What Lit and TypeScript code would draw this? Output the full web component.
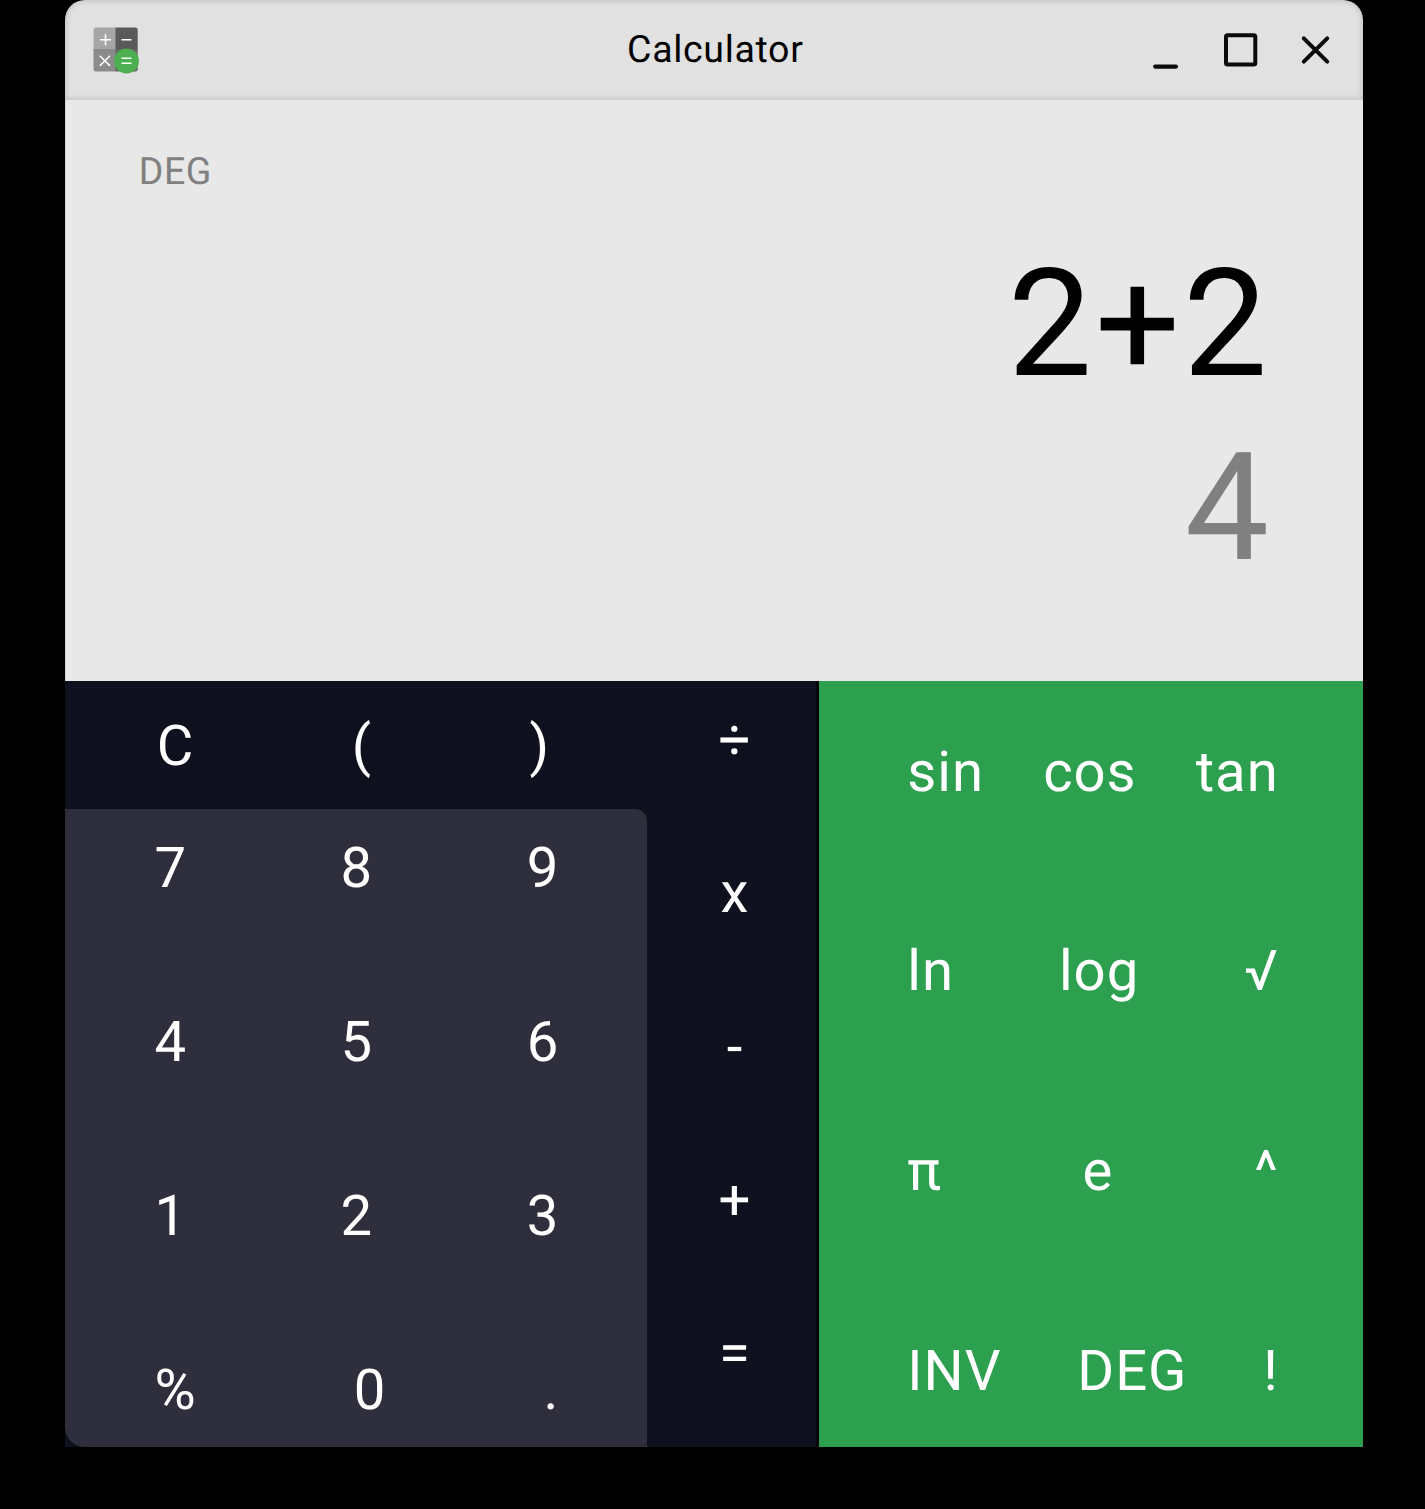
import { LitElement, html, css } from "lit";
import { customElement } from "lit/decorators.js";

const CLEAR_ROW = ["C", "(", ")"];
const DIGIT_ROWS = [
  ["7", "8", "9"],
  ["4", "5", "6"],
  ["1", "2", "3"],
  ["%", "0", "."],
];
const OPERATORS = ["÷", "x", "-", "+", "="];
const FUNCTION_ROWS = [
  ["sin", "cos", "tan"],
  ["ln", "log", "√"],
  ["π", "e", "^"],
  ["INV", "DEG", "!"],
];

@customElement("app-root")
export class AppRoot extends LitElement {
  static styles = css`
    :host {
      display: block;
      box-sizing: border-box;
      height: 1509px;
      padding: 0 62px 62px 65px;
      background: #000;
      overflow: hidden;
      font-family: Roboto, "Liberation Sans", sans-serif;
      text-rendering: geometricPrecision;
    }
    .window {
      display: flex;
      flex-direction: column;
      width: 1298px;
      height: 1447px;
    }
    .titlebar {
      box-sizing: border-box;
      display: grid;
      grid-template-columns: 1fr auto 1fr;
      align-items: center;
      height: 100px;
      padding: 0 30px 0 28px;
      background: #e1e1e1;
      border-radius: 20px 20px 0 0;
      box-shadow: inset 0 0 6px rgba(0, 0, 0, 0.2);
    }
    .logo {
      display: block;
    }
    .title {
      padding-left: 4.6px;
      font-size: 37.5px;
      line-height: 44px;
      letter-spacing: 0.018em;
      color: #000;
    }
    .controls {
      justify-self: end;
      display: block;
    }
    .display {
      box-sizing: border-box;
      height: 581px;
      padding: 50px 94px 0 73.7px;
      background: #e8e8e8;
      display: flex;
      flex-direction: column;
      box-shadow: inset 1px 0 0 #d4d4d4;
    }
    .mode {
      font-size: 37.5px;
      line-height: 44px;
      letter-spacing: 0.016em;
      color: #808080;
    }
    .expression,
    .result {
      text-align: right;
      font-size: 150px;
      line-height: 176px;
    }
    .expression {
      margin: 42px -1.4px 0 0;
      letter-spacing: 0.02em;
      color: #000;
    }
    .result {
      margin-top: 8px;
      color: #808080;
    }
    .pads {
      display: flex;
      height: 766px;
      color: #fff;
      font-size: 56.25px;
      line-height: 66px;
      letter-spacing: 0.017em;
    }
    .main {
      display: flex;
      width: 751px;
      background: #0f111e;
    }
    .left {
      display: flex;
      flex-direction: column;
      width: 582px;
    }
    .row {
      display: flex;
      justify-content: space-between;
    }
    .clear {
      box-sizing: border-box;
      height: 128px;
      padding: 32px 97px 0 91.8px;
    }
    .digits {
      box-sizing: border-box;
      flex: 1;
      display: flex;
      flex-direction: column;
      justify-content: space-between;
      padding: 26px 87.7px 24px 89.5px;
      background: #2f2e3c;
      border-radius: 0 12px 0 20px;
    }
    .operators {
      box-sizing: border-box;
      flex: 1;
      display: flex;
      flex-direction: column;
      align-items: center;
      justify-content: space-between;
      padding: 26px 0 61px 7px;
    }
    .divider {
      width: 3px;
      background: #020306;
    }
    .functions {
      box-sizing: border-box;
      flex: 1;
      display: flex;
      flex-direction: column;
      justify-content: space-between;
      padding: 57.6px 84.3px 43px 88.3px;
      background: #2ca04e;
    }
  `;

  private row(keys: string[], extra = "") {
    return html`<div class="row ${extra}">${keys.map((k) => html`<span>${k}</span>`)}</div>`;
  }

  render() {
    return html`
      <div class="window">
        <div class="titlebar">
          <svg class="logo" width="48" height="50" viewBox="0 0 48 50">
            <defs>
              <clipPath id="tile"><rect x="0.5" y="2.4" width="44.2" height="44" rx="2.5" /></clipPath>
            </defs>
            <g clip-path="url(#tile)">
              <rect width="23" height="25" fill="#a6a6a6" />
              <rect x="22.5" width="24" height="25" fill="#595959" />
              <rect y="24" width="23" height="24" fill="#8b8b8b" />
              <rect x="22.5" y="24" width="24" height="24" fill="#646464" />
            </g>
            <circle cx="33.5" cy="36" r="12.5" fill="#4caf50" />
            <g stroke="#fff" stroke-width="1.5" fill="none">
              <path d="M7 14.7H18M12.5 9.2V20.2M28.5 14.7H38.5M6.8 30.7L17 40.9M17 30.7L6.8 40.9M28.5 33.3H38.5M28.5 38.3H38.5" />
            </g>
          </svg>
          <span class="title">Calculator</span>
          <svg class="controls" width="182" height="40" viewBox="0 0 182 40" fill="none" stroke="#0a0a0a" stroke-linecap="round">
            <path d="M4.2 36.6H25" stroke-width="4.2" />
            <rect x="75" y="5.2" width="29.3" height="29.4" rx="1.6" stroke-width="4" />
            <path d="M152.8 8.3L176.2 31.7M176.2 8.3L152.8 31.7" stroke-width="4" />
          </svg>
        </div>
        <div class="display">
          <div class="mode">DEG</div>
          <div class="expression">2+2</div>
          <div class="result">4</div>
        </div>
        <div class="pads">
          <div class="main">
            <div class="left">
              ${this.row(CLEAR_ROW, "clear")}
              <div class="digits">${DIGIT_ROWS.map((r) => this.row(r))}</div>
            </div>
            <div class="operators">${OPERATORS.map((k) => html`<span>${k}</span>`)}</div>
          </div>
          <div class="divider"></div>
          <div class="functions">${FUNCTION_ROWS.map((r) => this.row(r))}</div>
        </div>
      </div>
    `;
  }
}
